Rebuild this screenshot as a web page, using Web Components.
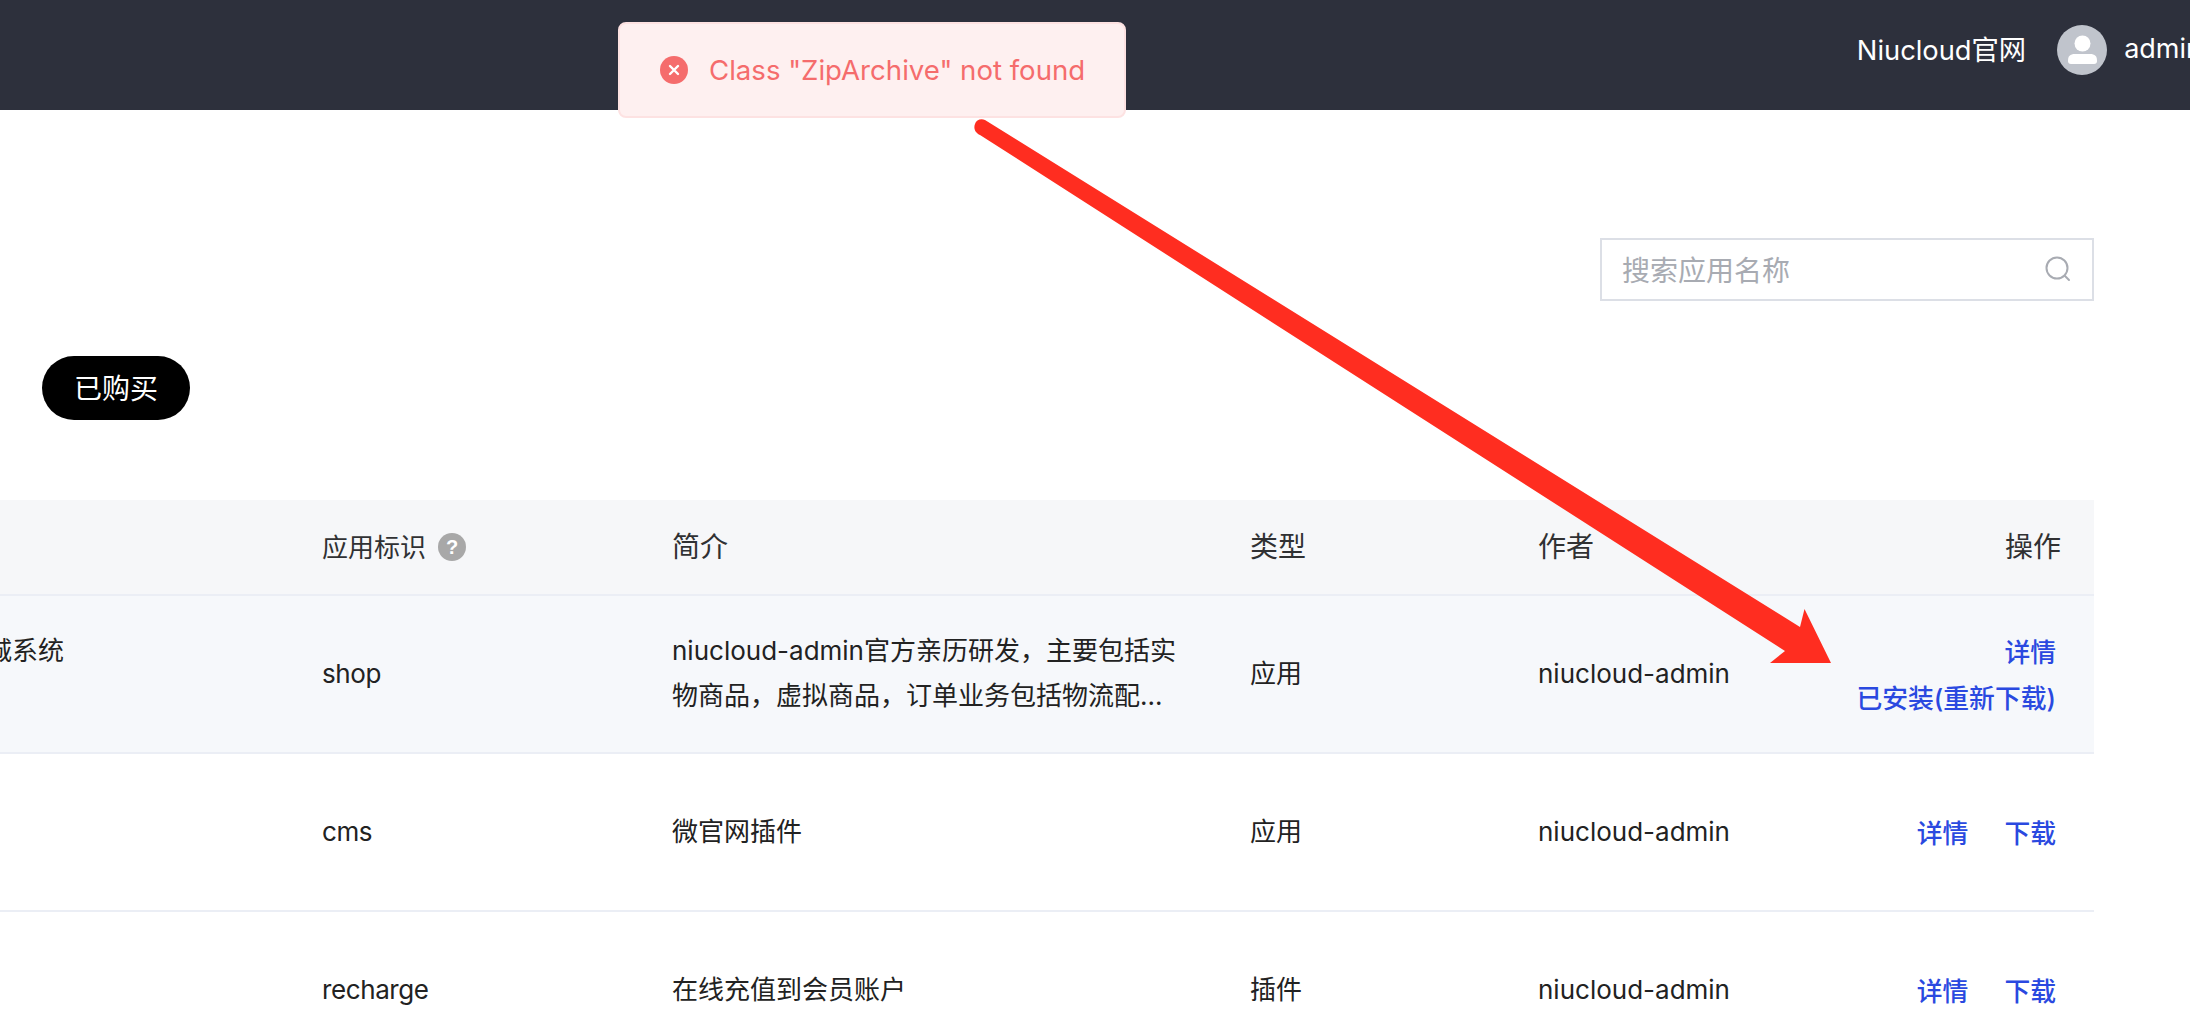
<!DOCTYPE html>
<html lang="zh">
<head>
<meta charset="utf-8">
<title>Niucloud</title>
<style>
  html, body { margin: 0; height: 100%; overflow: hidden; background: #fff; }
  body { font-family: Inter, "Noto Sans CJK SC", sans-serif; }
</style>
</head>
<body>
<app-page>
  <app-header></app-header>
  <app-toast>Class "ZipArchive" not found</app-toast>
  <app-search placeholder="搜索应用名称"></app-search>
  <app-pill>已购买</app-pill>
  <app-table>
    <app-row tinted>
      <span slot="name">商城系统</span>
      <span slot="key">shop</span>
      <span slot="desc">niucloud-admin官方亲历研发，主要包括实物商品，虚拟商品，订单业务包括物流配...</span>
      <span slot="type">应用</span>
      <span slot="author">niucloud-admin</span>
      <app-link slot="ops">详情</app-link>
      <app-link slot="ops">已安装(重新下载)</app-link>
    </app-row>
    <app-row>
      <span slot="key">cms</span>
      <span slot="desc">微官网插件</span>
      <span slot="type">应用</span>
      <span slot="author">niucloud-admin</span>
      <app-link slot="ops">详情</app-link>
      <app-link slot="ops">下载</app-link>
    </app-row>
    <app-row>
      <span slot="key">recharge</span>
      <span slot="desc">在线充值到会员账户</span>
      <span slot="type">插件</span>
      <span slot="author">niucloud-admin</span>
      <app-link slot="ops">详情</app-link>
      <app-link slot="ops">下载</app-link>
    </app-row>
  </app-table>
  <app-arrow></app-arrow>
</app-page>

<script>
class AppPage extends HTMLElement {
  constructor() {
    super();
    this.attachShadow({mode: "open"});
    this.shadowRoot.innerHTML = `
    <style>
      :host { display: flex; flex-direction: column; position: relative; width: 2190px; height: 1022px; overflow: hidden; }
    </style>
    <slot></slot>`;
  }
}

class AppHeader extends HTMLElement {
  constructor() {
    super();
    this.attachShadow({mode: "open"});
    this.shadowRoot.innerHTML = `
    <style>
      :host { display: flex; align-items: center; justify-content: flex-end; box-sizing: border-box; height: 110px; padding-bottom: 10px; flex: none; background: #2d303c; color: #fff; font-size: 27px; }
      .right { display: flex; align-items: center; margin-right: -12px; }
      .site { margin-right: 31px; font-size: 27.3px; position: relative; top: -2px; }
      .user { position: relative; top: -2px; }
      svg { display: block; margin-right: 17px; }
    </style>
    <div class="right">
      <span class="site">Niucloud官网</span>
      <svg width="50" height="50" viewBox="0 0 50 50">
        <circle cx="25" cy="25" r="25" fill="#c0c4cc"/>
        <circle cx="25.500" cy="18.500" r="8" fill="#fff"/>
        <path d="M11 36c0-5 2-7 7-7h15c5 0 7 2 7 7 0 2-1 3-3 3H14c-2 0-3-1-3-3z" fill="#fff"/>
      </svg>
      <span class="user">admin</span>
    </div>`;
  }
}

class AppToast extends HTMLElement {
  constructor() {
    super();
    this.attachShadow({mode: "open"});
    this.shadowRoot.innerHTML = `
    <style>
      :host { position: absolute; left: 618px; top: 22px; z-index: 5; box-sizing: border-box; width: 508px; height: 96px; display: flex; align-items: center; gap: 21px; padding-left: 40px; background: #fef0f0; border: 2px solid #fde2e2; border-radius: 8px; color: #f56c6c; font-size: 27.6px; white-space: nowrap; }
      svg { flex: none; display: block; }
    </style>
    <svg width="28" height="28" viewBox="0 0 28 28">
      <circle cx="14" cy="14" r="14" fill="#f56c6c"/>
      <path d="M10 10l8 8M18 10l-8 8" stroke="#fff" stroke-width="2.400" stroke-linecap="round"/>
    </svg>
    <slot></slot>`;
  }
}

class AppSearch extends HTMLElement {
  constructor() {
    super();
    this.attachShadow({mode: "open"});
    this.shadowRoot.innerHTML = `
    <style>
      :host { display: flex; align-items: center; justify-content: space-between; flex: none; box-sizing: border-box; width: 494px; height: 63px; margin: 128px 0 0 1600px; padding: 0 21px 2px 20px; border: 2px solid #dcdfe6; background: #fff; color: #a8abb2; font-size: 28px; }
      svg { display: block; }
    </style>
    <span id="ph"></span>
    <svg width="26" height="26" viewBox="0 0 26 26" fill="none" stroke="#a8abb2" stroke-width="2">
      <circle cx="12" cy="12" r="10.500"/>
      <path d="M20 20l4 4" stroke-linecap="round"/>
    </svg>`;
  }
  connectedCallback() {
    this.shadowRoot.getElementById("ph").textContent = this.getAttribute("placeholder");
  }
}

class AppPill extends HTMLElement {
  constructor() {
    super();
    this.attachShadow({mode: "open"});
    this.shadowRoot.innerHTML = `
    <style>
      :host { display: flex; align-items: center; justify-content: center; flex: none; align-self: flex-start; box-sizing: border-box; width: 148px; height: 64px; margin: 55px 0 0 42px; padding-bottom: 2px; border-radius: 32px; background: #000; color: #fff; font-size: 28px; }
    </style>
    <slot></slot>`;
  }
}

const COLUMNS = "322px 350px 578px 288px 1fr auto";

class AppTable extends HTMLElement {
  constructor() {
    super();
    this.attachShadow({mode: "open"});
    this.shadowRoot.innerHTML = `
    <style>
      :host { display: block; flex: none; width: 2094px; margin-top: 80px; }
      .head { display: grid; grid-template-columns: ${COLUMNS}; align-items: center; box-sizing: border-box; height: 96px; padding: 0 33px 4px 0; background: #f6f7f9; border-bottom: 2px solid #ebeef5; color: #303133; font-size: 28px; }
      .key { display: flex; align-items: center; gap: 12px; font-size: 26px; }
      svg { display: block; position: relative; top: 2px; }
    </style>
    <div class="head">
      <span></span>
      <span class="key">应用标识
        <svg width="28" height="28" viewBox="0 0 28 28">
          <circle cx="14" cy="14" r="14" fill="#a8a8a8"/>
          <text x="14" y="21" text-anchor="middle" font-family="Liberation Sans" font-size="20" font-weight="700" fill="#fff">?</text>
        </svg>
      </span>
      <span>简介</span>
      <span>类型</span>
      <span>作者</span>
      <span>操作</span>
    </div>
    <slot></slot>`;
  }
}

class AppRow extends HTMLElement {
  constructor() {
    super();
    this.attachShadow({mode: "open"});
    this.shadowRoot.innerHTML = `
    <style>
      :host { display: grid; grid-template-columns: ${COLUMNS}; align-items: center; box-sizing: border-box; height: 158px; padding: 0 38px 2px 0; border-bottom: 2px solid #ebeef5; color: #222; font-size: 26px; line-height: 45px; }
      :host([tinted]) { background: #f6f8fb; }
      .name { margin-left: -40px; padding-bottom: 46px; white-space: nowrap; }
      .key { letter-spacing: -.4px; }
      .desc { width: 505px; }
      .ops { display: flex; justify-content: flex-end; flex-wrap: wrap; gap: 0 36px; max-width: 204px; line-height: 46px; position: relative; top: 3px; }
    </style>
    <div class="name"><slot name="name"></slot></div>
    <div class="key"><slot name="key"></slot></div>
    <div class="desc"><slot name="desc"></slot></div>
    <div><slot name="type"></slot></div>
    <div><slot name="author"></slot></div>
    <div class="ops"><slot name="ops"></slot></div>`;
  }
}

class AppLink extends HTMLElement {
  constructor() {
    super();
    this.attachShadow({mode: "open"});
    this.shadowRoot.innerHTML = `
    <style>
      :host { display: block; color: #2a49e0; font-size: 25.8px; font-weight: 500; white-space: nowrap; cursor: pointer; }
    </style>
    <slot></slot>`;
  }
}

class AppArrow extends HTMLElement {
  constructor() {
    super();
    this.attachShadow({mode: "open"});
    this.shadowRoot.innerHTML = `
    <style>
      :host { position: absolute; left: 0; top: 0; z-index: 6; pointer-events: none; }
      svg { display: block; }
    </style>
    <svg width="2190" height="1022" viewBox="0 0 2190 1022">
      <path d="M975 124c1-4 6-6 10-4L1800 627l4.500-18L1831 663H1770l15-12L980 135c-4-2-7-6-5-11z" fill="#ff2d20"/>
    </svg>`;
  }
}

customElements.define("app-page", AppPage);
customElements.define("app-header", AppHeader);
customElements.define("app-toast", AppToast);
customElements.define("app-search", AppSearch);
customElements.define("app-pill", AppPill);
customElements.define("app-table", AppTable);
customElements.define("app-row", AppRow);
customElements.define("app-link", AppLink);
customElements.define("app-arrow", AppArrow);
</script>
</body>
</html>
